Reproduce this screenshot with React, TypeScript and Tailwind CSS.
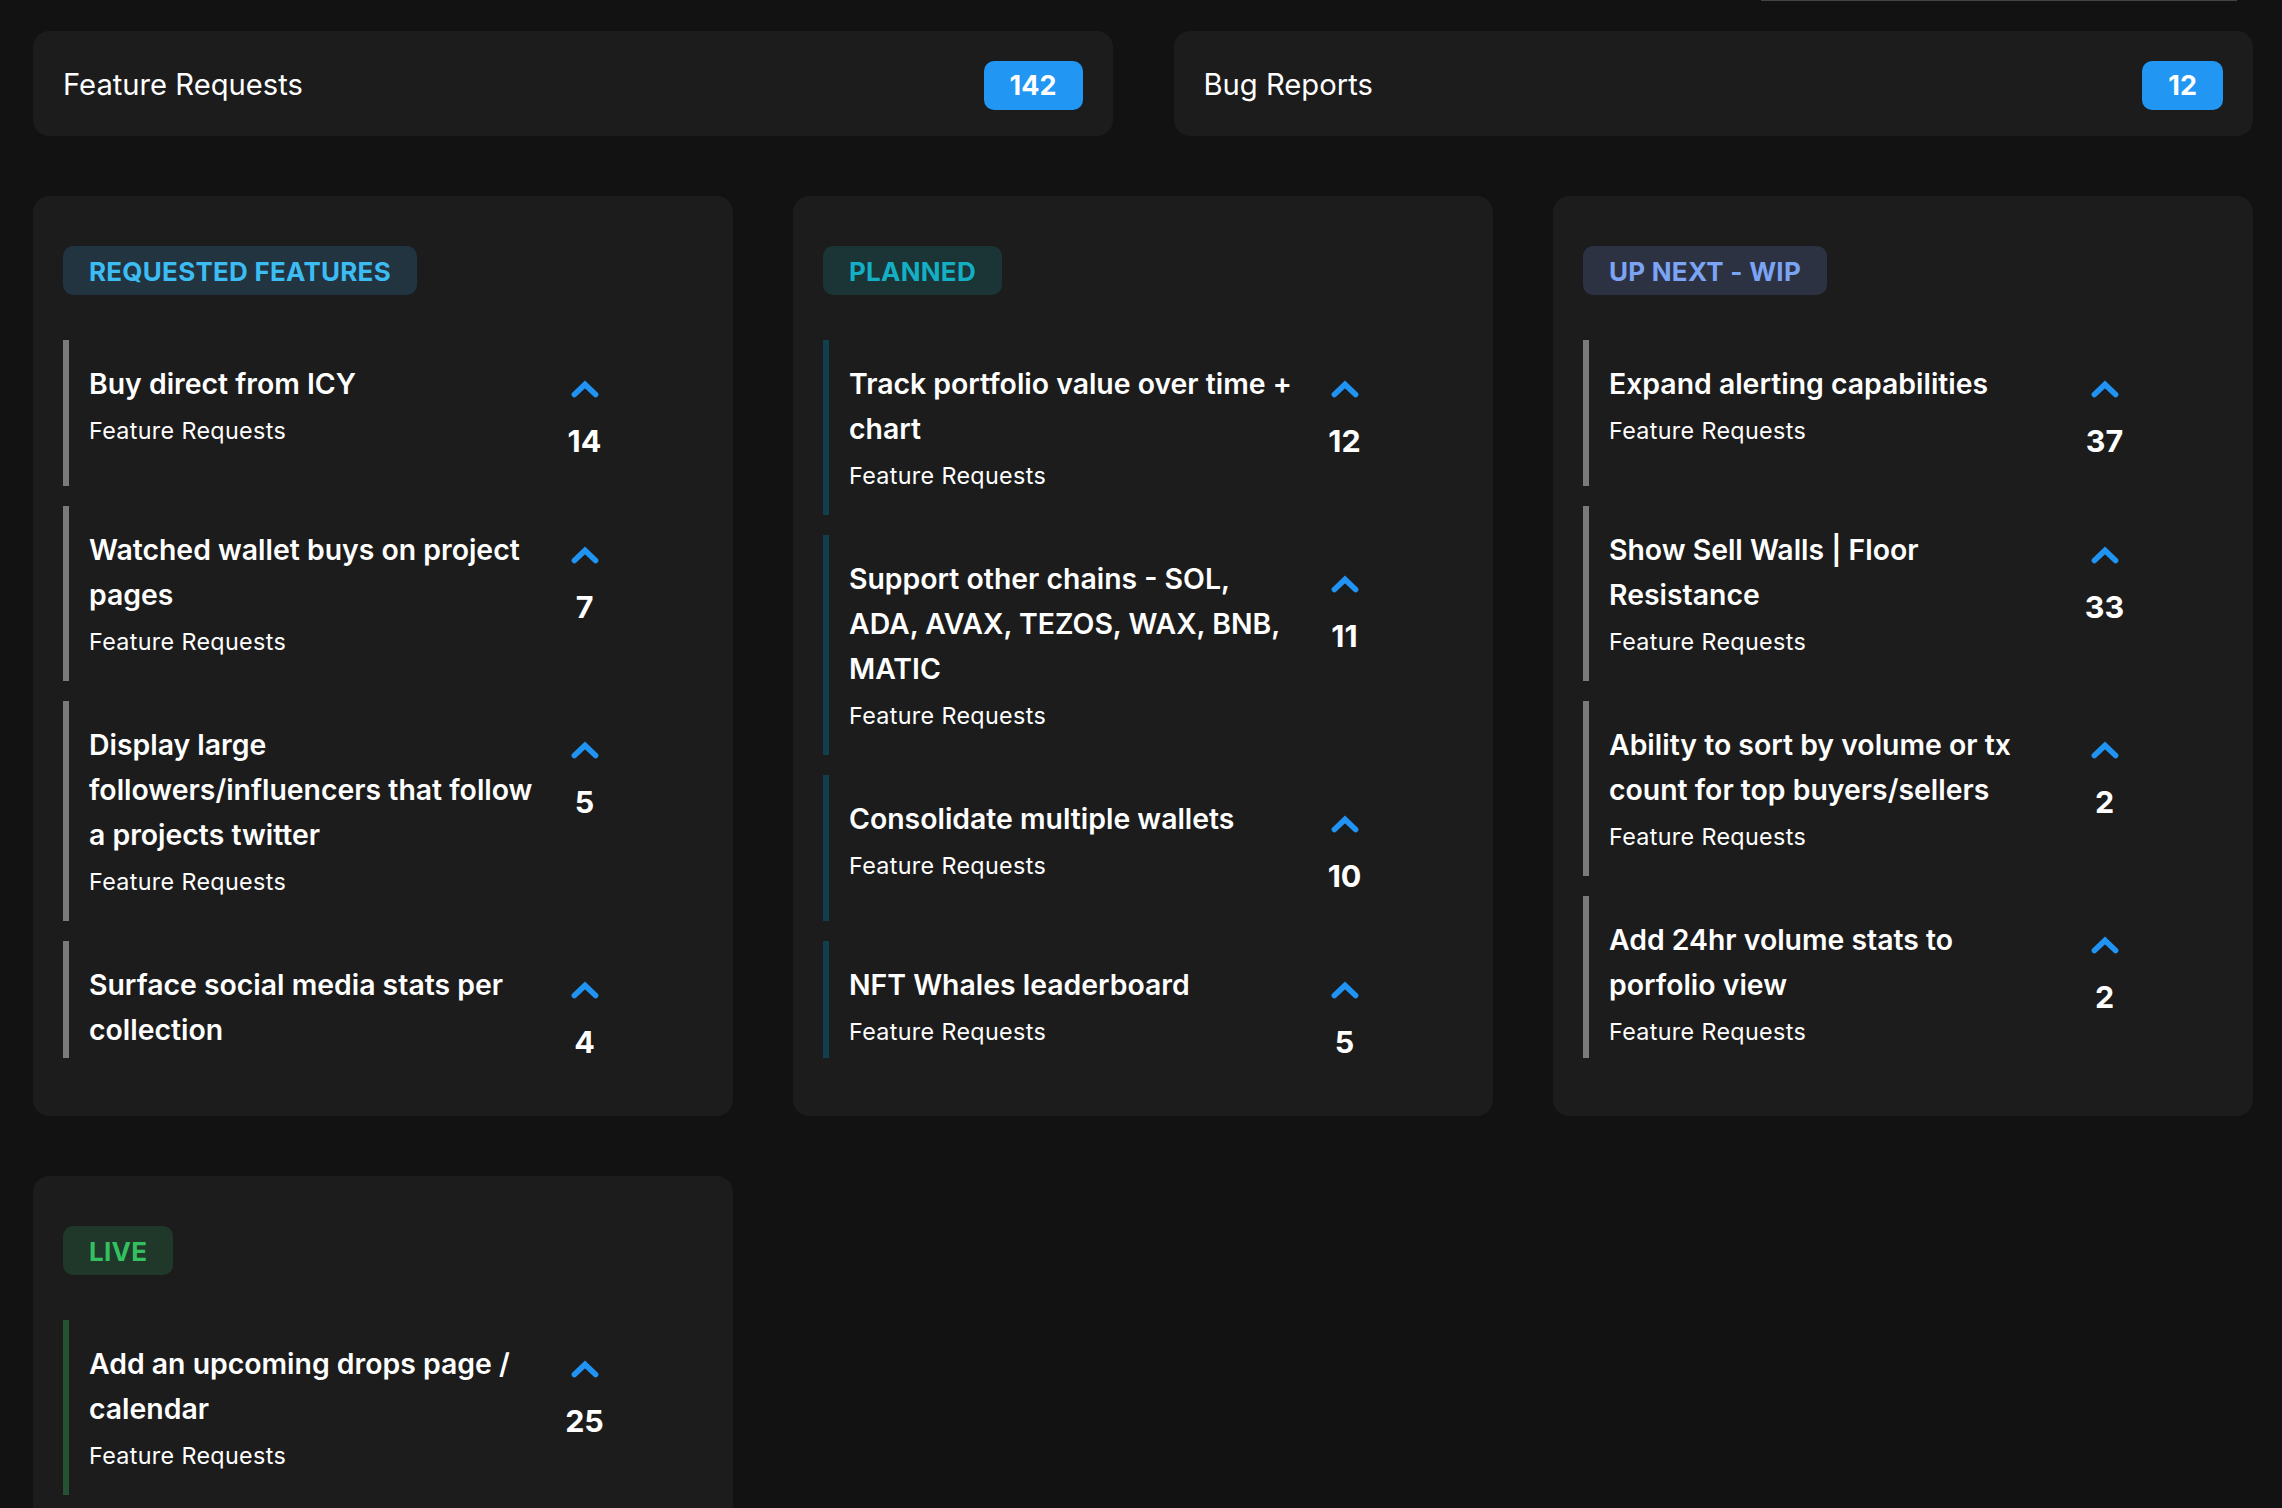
const columns = [
  {
    label: "REQUESTED FEATURES",
    pill: "bg-[#21343f] text-[#3cbcf2]",
    bar: "border-[#7a7a7a]",
    items: [
      { title: "Buy direct from ICY", votes: 14 },
      { title: "Watched wallet buys on project pages", votes: 7 },
      { title: "Display large followers/influencers that follow a projects twitter", votes: 5 },
      { title: "Surface social media stats per collection", votes: 4 },
    ],
  },
  {
    label: "PLANNED",
    pill: "bg-[#1b3536] text-[#14afc4]",
    bar: "border-[#113f4e]",
    items: [
      { title: "Track portfolio value over time + chart", votes: 12 },
      { title: "Support other chains - SOL, ADA, AVAX, TEZOS, WAX, BNB, MATIC", votes: 11 },
      { title: "Consolidate multiple wallets", votes: 10 },
      { title: "NFT Whales leaderboard", votes: 5 },
    ],
  },
  {
    label: "UP NEXT - WIP",
    pill: "bg-[#2d3243] text-[#7ba4f5]",
    bar: "border-[#7a7a7a]",
    items: [
      { title: "Expand alerting capabilities", votes: 37 },
      { title: "Show Sell Walls | Floor Resistance", votes: 33 },
      { title: "Ability to sort by volume or tx count for top buyers/sellers", votes: 2 },
      { title: "Add 24hr volume stats to porfolio view", votes: 2 },
    ],
  },
  {
    label: "LIVE",
    pill: "bg-[#20382a] text-[#34c060]",
    bar: "border-[#255233]",
    items: [{ title: "Add an upcoming drops page / calendar", votes: 25 }],
  },
]

function Chevron() {
  return (
    <svg width="28" height="18" viewBox="0 0 28 18" fill="none" className="text-[#2093f3]">
      <path d="M3.4 14.6 L14 4.4 L24.6 14.6" stroke="currentColor" strokeWidth="5.6" strokeLinecap="round" />
    </svg>
  )
}

function Item({ title, votes, bar }: { title: string; votes: number; bar: string }) {
  return (
    <div className={`flex shrink-0 border-l-[6px] ${bar}`}>
      <div className="w-[472px] pl-[20px] pt-[21px] pb-[15px]">
        <div className="text-[28.4px] leading-[45px] font-semibold text-white">{title}</div>
        <div className="pt-[1px] text-[23.3px] leading-[48px] text-white tracking-[0.015em]">Feature Requests</div>
      </div>
      <div className="w-[87px] h-[146px] pt-[40px] flex flex-col items-center">
        <Chevron />
        <div className="mt-[20px] text-[30.5px] leading-[45px] font-bold text-white">{votes}</div>
      </div>
    </div>
  )
}

function App() {
  return (
    <div className="relative h-[1508px] overflow-hidden bg-[#121212] pl-[33px] pr-[29px] pt-[31px] font-['Inter',sans-serif]">
      <div className="absolute top-0 left-[1761px] w-[476px] h-[1px] bg-[#444444]" />

      <div className="grid grid-cols-2 gap-x-[61px]">
        {[
          { name: "Feature Requests", count: 142 },
          { name: "Bug Reports", count: 12 },
        ].map((stat) => (
          <div key={stat.name} className="h-[105px] pt-[3px] flex items-center justify-between rounded-[16px] bg-[#1c1c1c] px-[30px]">
            <span className="text-[29.2px] text-white">{stat.name}</span>
            <span className="h-[49px] pt-[2px] flex items-center rounded-[10px] bg-[#2196f3] px-[26px] text-[27px] font-bold text-white">{stat.count}</span>
          </div>
        ))}
      </div>

      <div className="mt-[60px] grid grid-cols-3 gap-[60px]">
        {columns.map((col) => (
          <div key={col.label} className="rounded-[16px] bg-[#1c1c1c] px-[30px] pt-[50px] pb-[58px]">
            <span className={`inline-flex h-[49px] pt-[2px] items-center rounded-[10px] px-[26px] text-[26px] font-bold tracking-[0.25px] ${col.pill}`}>{col.label}</span>
            <div className="mt-[45px] flex flex-col gap-[20px] max-h-[718px] overflow-hidden">
              {col.items.map((item) => (
                <Item key={item.title} title={item.title} votes={item.votes} bar={col.bar} />
              ))}
            </div>
          </div>
        ))}
      </div>
    </div>
  )
}

export default App
